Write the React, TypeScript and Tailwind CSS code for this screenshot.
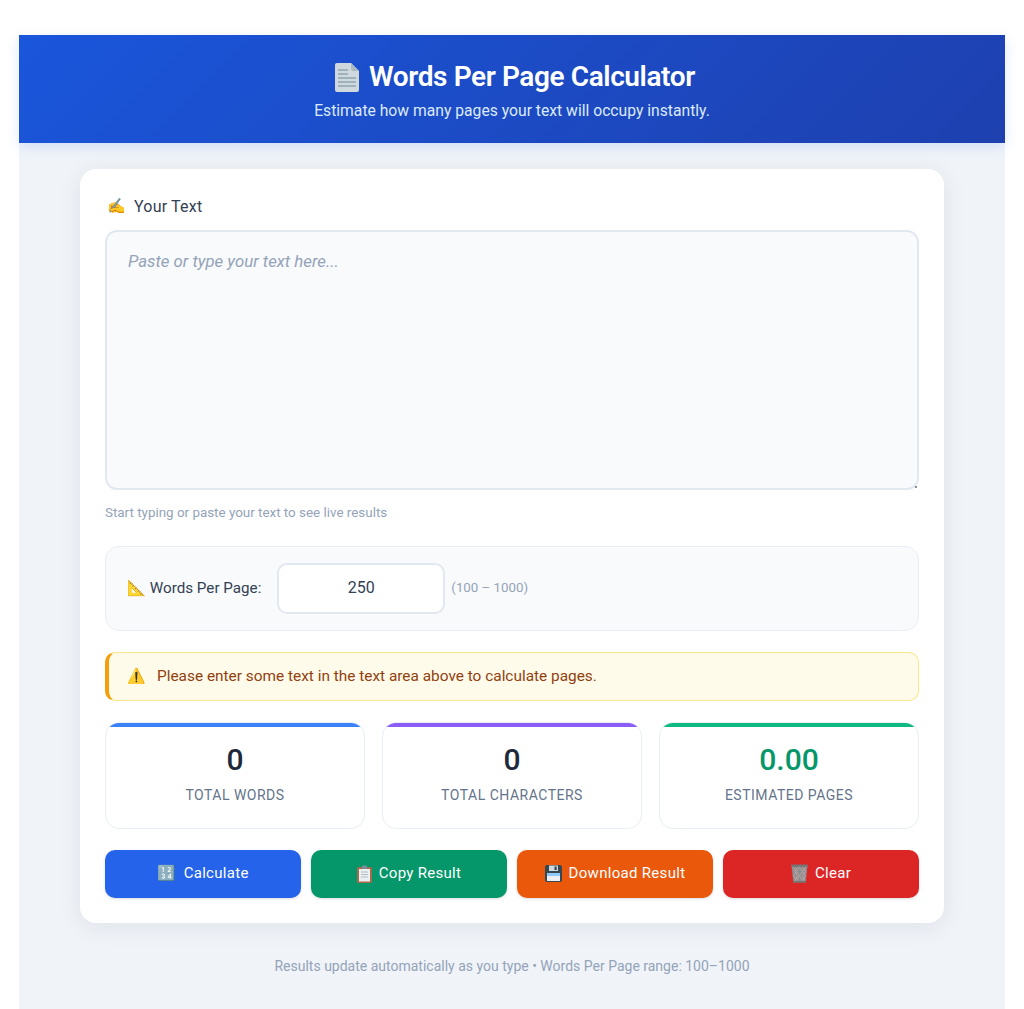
const stats = [
  { value: "0", label: "TOTAL WORDS", bar: "bg-[#3b82f6]", text: "text-[#1e293b]" },
  { value: "0", label: "TOTAL CHARACTERS", bar: "bg-[#8b5cf6]", text: "text-[#1e293b]" },
  { value: "0.00", label: "ESTIMATED PAGES", bar: "bg-[#10b981]", text: "text-[#059669]" },
];

function DocIcon() {
  return (
    <svg width="24" height="29" viewBox="0 0 24 29" className="shrink-0">
      <path d="M2 0h14l8 8v19a2 2 0 0 1-2 2H2a2 2 0 0 1-2-2V2a2 2 0 0 1 2-2z" fill="#cfd8dc" />
      <path d="M16 0l8 8h-6a2 2 0 0 1-2-2z" fill="#a9bac3" />
      <path d="M3 7h10M3 11h10M3 15h18M3 19h18M3 23h18" stroke="#90a4ae" strokeWidth="1.6" />
    </svg>
  );
}

function ClipboardIcon() {
  return (
    <svg width="15" height="18" viewBox="0 0 15 18">
      <rect x="0" y="2" width="15" height="16" rx="1.5" fill="#a56a4b" />
      <rect x="2" y="4" width="11" height="12.5" fill="#eceff1" />
      <rect x="5" y="0.5" width="5" height="3.5" rx="1" fill="#78909c" />
      <path d="M4 7h7M4 9.5h7M4 12h7" stroke="#b0bec5" strokeWidth="1" />
    </svg>
  );
}

function FloppyIcon() {
  return (
    <svg width="17" height="17" viewBox="0 0 17 17">
      <rect width="17" height="17" rx="2" fill="#37474f" />
      <rect x="2" y="8" width="13" height="8" fill="#eceff1" />
      <rect x="2" y="8" width="13" height="3" fill="#90caf9" />
      <rect x="4" y="0.5" width="9" height="5.5" fill="#cfd8dc" />
      <rect x="9.5" y="1.5" width="2.2" height="3.5" fill="#37474f" />
    </svg>
  );
}

function TrashIcon() {
  return (
    <svg width="17" height="19" viewBox="0 0 17 19">
      <path d="M0.5 1.5h16l-1.8 16.5H2.3z" fill="#8d8d8d" />
      <path d="M2.5 3.5l3 4-3 4 3 5M6 3.5l-2.500 4 3 4-2.500 5M8.500 3.500l3 4-3 4 3 5M8.500 3.500l-3 4 3 4-3 5M11.500 3.500l3 4-3 4 2 5M14.500 3.500l-3 4 3 4-3 5" stroke="#b9a5a5" strokeWidth="1" fill="none" />
      <rect x="0" y="0.500" width="17" height="2.200" rx="1" fill="#757575" />
      <rect x="2" y="17" width="13" height="1.800" fill="#757575" />
    </svg>
  );
}

const buttons = [
  { icon: <span className="text-[15px]">🔢</span>, label: "Calculate", color: "bg-[#2563eb]" },
  { icon: <ClipboardIcon />, label: "Copy Result", color: "bg-[#059669]" },
  { icon: <FloppyIcon />, label: "Download Result", color: "bg-[#ea580c]" },
  { icon: <TrashIcon />, label: "Clear", color: "bg-[#dc2626]" },
];

export default function App() {
  return (
    <div className="h-[1009px] overflow-hidden bg-white px-[19px] pt-[35px] font-['Roboto',sans-serif]">
      <div className="h-[974px] bg-[#f0f4f9]">
        <header className="flex h-[108px] flex-col items-center bg-[linear-gradient(135deg,#1a56db,#1e40af)] pt-[23px] shadow-[0_4px_12px_rgba(37,99,235,0.15)]">
          <h1 className="flex items-center gap-[10px] pl-[6px] text-[28px] leading-[38px] font-semibold tracking-[-0.4px] text-white">
            <DocIcon />
            Words Per Page Calculator
          </h1>
          <p className="mt-[3px] text-[15.7px] leading-[24px] text-[#dbeafe]">Estimate how many pages your text will occupy instantly.</p>
        </header>

        <main className="mx-auto mt-[26px] h-[754px] w-[864px] rounded-[16px] bg-white px-[25px] pt-[26px] shadow-[0_4px_24px_rgba(15,23,42,0.08)]">
          <label className="flex h-[22px] items-center pt-[1px] pl-[2px] text-base text-[#334155]">
            <span className="w-[27px] text-[15px]">✍️</span>
            <span className="tracking-[0.2px]">Your Text</span>
          </label>
          <div className="relative mt-[13px]">
            <textarea
              placeholder="Paste or type your text here..."
              className="block h-[260px] w-full resize-none rounded-[12px] border-2 border-[#e2e8f0] bg-[#f8fafc] px-[21px] py-[17px] text-[16.8px] leading-[24px] text-[#334155] placeholder:text-[#94a3b8] placeholder:italic"
            />
            <span className="absolute right-[2px] bottom-[2px] h-[2px] w-[2px] bg-[#8a9099]" />
          </div>
          <p className="mt-[14px] text-[13.4px] leading-[18px] text-[#94a3b8]">Start typing or paste your text to see live results</p>

          <div className="mt-[24px] flex h-[85px] items-center rounded-[14px] border border-[#e8eef6] bg-[#f8fafc] pb-[1px] pl-[21px]">
            <span className="text-[15.2px] text-[#334155]">📐 Words Per Page:</span>
            <input
              defaultValue="250"
              className="ml-[16px] h-[51px] w-[168px] rounded-[10px] border-2 border-[#e2e8f0] bg-white pb-[1px] text-center text-base text-[#334155]"
            />
            <span className="ml-[6px] text-[13.3px] text-[#94a3b8]">(100 – 1000)</span>
          </div>

          <div className="mt-[21px] flex h-[49px] items-center rounded-[10px] border border-l-4 border-[#fde68a] border-l-[#f59e0b] bg-[#fffbeb] pl-[18px] text-[15.4px] text-[#92400e]">
            <span className="text-[15px]">⚠️</span>
            <span className="ml-[11px]">Please enter some text in the text area above to calculate pages.</span>
          </div>

          <div className="mt-[21px] grid grid-cols-3 gap-[17px]">
            {stats.map((s) => (
              <div key={s.label} className="h-[107px] overflow-hidden rounded-[14px] border border-[#e8eef6] bg-white text-center">
                <div className={`h-[4px] ${s.bar}`} />
                <div className={`mt-[11px] text-[30px] leading-[44px] font-medium ${s.text}`}>{s.value}</div>
                <div className="mt-[3px] text-sm leading-[20px] tracking-[0.5px] text-[#64748b]">{s.label}</div>
              </div>
            ))}
          </div>

          <div className="mt-[21px] grid grid-cols-4 gap-[10px]">
            {buttons.map((b) => (
              <button key={b.label} className={`flex h-[48px] items-center justify-center gap-[7px] rounded-[10px] pb-[1px] text-[15px] tracking-[0.3px] text-white shadow-[0_1px_3px_rgba(15,23,42,0.15)] ${b.color}`}>
                {b.icon}
                {b.label}
              </button>
            ))}
          </div>
        </main>

        <footer className="mt-[33px] text-center text-sm leading-[20px] text-[#94a3b8]">
          Results update automatically as you type • Words Per Page range: 100–1000
        </footer>
      </div>
    </div>
  );
}
